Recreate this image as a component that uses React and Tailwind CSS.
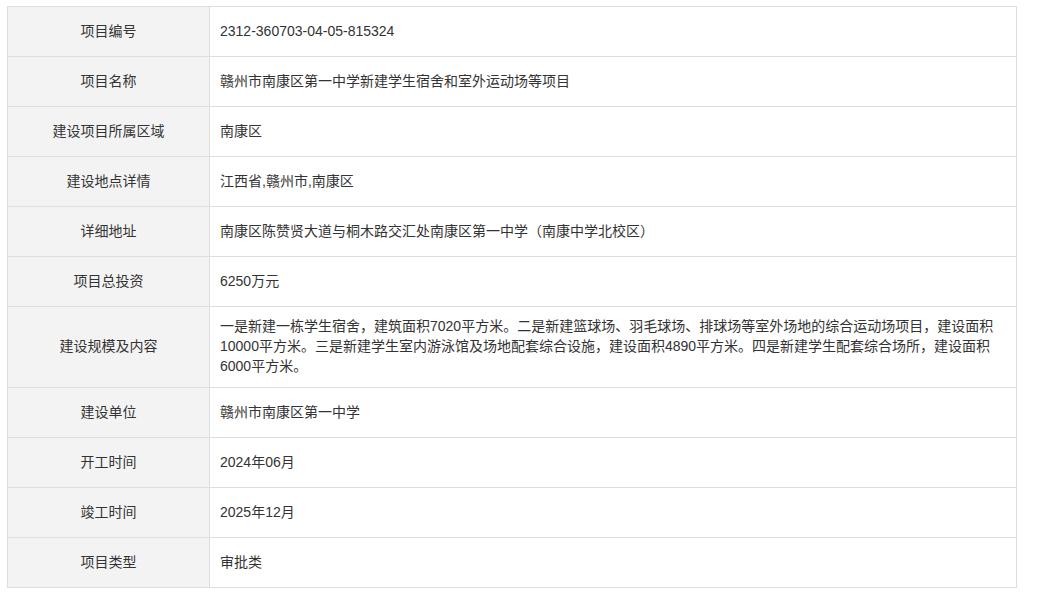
const rows = [
  ['项目编号', '2312-360703-04-05-815324'],
  ['项目名称', '赣州市南康区第一中学新建学生宿舍和室外运动场等项目'],
  ['建设项目所属区域', '南康区'],
  ['建设地点详情', '江西省,赣州市,南康区'],
  ['详细地址', '南康区陈赞贤大道与桐木路交汇处南康区第一中学（南康中学北校区）'],
  ['项目总投资', '6250万元'],
  [
    '建设规模及内容',
    '一是新建一栋学生宿舍，建筑面积7020平方米。二是新建篮球场、羽毛球场、排球场等室外场地的综合运动场项目，建设面积10000平方米。三是新建学生室内游泳馆及场地配套综合设施，建设面积4890平方米。四是新建学生配套综合场所，建设面积6000平方米。',
  ],
  ['建设单位', '赣州市南康区第一中学'],
  ['开工时间', '2024年06月'],
  ['竣工时间', '2025年12月'],
  ['项目类型', '审批类'],
];

export default function App() {
  return (
    <div
      className="min-h-screen bg-white pt-[6px] pl-[7px] text-[14px] leading-[20px] text-[#333]"
      style={{ fontFamily: '"Liberation Sans", "Noto Sans CJK SC", sans-serif' }}
    >
      <table className="w-[1010px] border-collapse table-fixed">
        <colgroup>
          <col className="w-[202px]" />
          <col />
        </colgroup>
        <tbody>
          {rows.map(([label, value]) => (
            <tr key={label}>
              <td className="h-[50px] border border-[#dedede] bg-[#f3f3f3] px-[10px] pt-[9px] pb-[11px] text-center align-middle">
                {label}
              </td>
              <td className="h-[50px] border border-[#dedede] px-[10px] pt-[9px] pb-[11px] text-left align-middle">
                {value}
              </td>
            </tr>
          ))}
        </tbody>
      </table>
    </div>
  );
}
